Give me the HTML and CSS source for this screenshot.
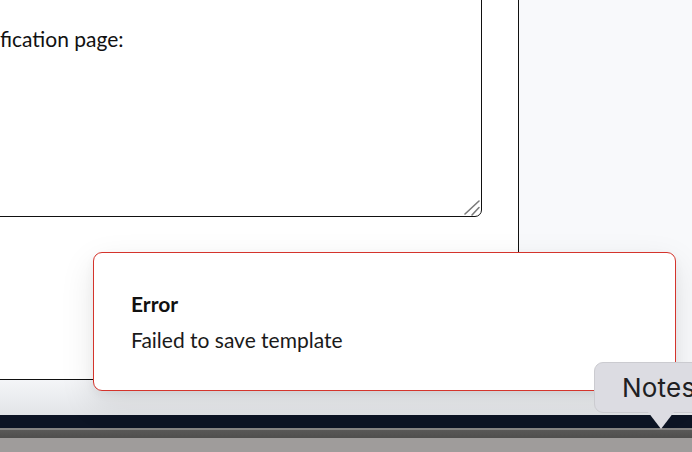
FILE: index.html
```html
<!DOCTYPE html>
<html>
<head>
<meta charset="utf-8">
<link rel="stylesheet" href="styles.css">
</head>
<body>
<div class="screen">
  <div class="app">
    <div class="main">
      <div class="card">
        <textarea class="message" spellcheck="false">fication page:</textarea>
        <svg class="grip" width="18" height="18" viewBox="0 0 18 18" aria-hidden="true">
          <line x1="1" y1="15" x2="15" y2="2" stroke="#7a7a7a" stroke-width="1.6" stroke-linecap="round"/>
          <line x1="8" y1="16" x2="15" y2="8.5" stroke="#7a7a7a" stroke-width="1.6" stroke-linecap="round"/>
        </svg>
      </div>
    </div>
    <div class="side"></div>
  </div>
  <div class="topbar"></div>
  <div class="dock">
    <div class="dock-rim"></div>
    <div class="dock-shade"></div>
    <div class="dock-body"></div>
  </div>

  <div class="toast" role="alert">
    <div class="toast-title">Error</div>
    <div class="toast-desc">Failed to save template</div>
  </div>

  <div class="tooltip">
    <span class="tooltip-label">Notes</span>
    <span class="tooltip-arrow"></span>
  </div>
</div>
</body>
</html>
```

FILE: styles.css
```css
html, body {
  margin: 0;
  padding: 0;
}
body {
  width: 692px;
  height: 452px;
  overflow: hidden;
  background: #f8f9fb;
  font-family: Lato, "Noto Sans", sans-serif;
}
.screen {
  position: relative;
  width: 692px;
  height: 452px;
  display: flex;
  flex-direction: column;
  overflow: hidden;
}
.app {
  height: 415px;
  display: flex;
  background: linear-gradient(to bottom, #f8f9fb 0, #f8f9fb 372px, #eceef1 395px, #e2e4e7 415px);
}
.main {
  margin-left: -24px;
  margin-top: -40px;
  width: 543px;
  flex: none;
}
.card {
  position: relative;
  box-sizing: border-box;
  height: 420px;
  background: #fff;
  border-right: 1px solid #111;
  border-bottom: 1px solid #111;
  padding: 0 36px 0 0;
}
.message {
  display: block;
  box-sizing: border-box;
  width: 506px;
  height: 257px;
  margin: 0;
  padding: 62px 12px 8px 23px;
  border: 1px solid #111;
  border-radius: 7px;
  font-family: Lato, "Noto Sans", sans-serif;
  font-size: 21px;
  line-height: 32px;
  color: #111;
  background: #fff;
  resize: none;
  outline: none;
  overflow: hidden;
}
.grip {
  position: absolute;
  left: 488px;
  top: 239px;
}
.side {
  flex: 1;
}
.topbar {
  height: 13px;
  background: #0c1424;
  flex: none;
}
.dock {
  flex: 1;
  display: flex;
  flex-direction: column;
}
.dock-rim {
  height: 2px;
  background: #858483;
}
.dock-shade {
  height: 8px;
  background: linear-gradient(to bottom, #5a5958, #4f4e4d);
}
.dock-body {
  flex: 1;
  background: #9f9c9b;
}
.toast {
  position: absolute;
  left: 93px;
  top: 252px;
  box-sizing: border-box;
  width: 583px;
  height: 139px;
  padding: 37px 36px 0 37px;
  background: #fff;
  border: 1px solid #d4342c;
  border-radius: 9px;
  box-shadow: 0 12px 34px rgba(0, 0, 0, 0.10), 0 4px 10px rgba(0, 0, 0, 0.05);
  color: #111;
}
.toast-title {
  font-size: 21px;
  line-height: 28px;
  font-weight: 700;
}
.toast-desc {
  margin-top: 8px;
  font-size: 21px;
  line-height: 28px;
  color: #1a1a1a;
}
.tooltip {
  position: absolute;
  left: 594px;
  top: 362px;
  box-sizing: border-box;
  width: 130px;
  height: 51px;
  padding-left: 27px;
  display: flex;
  align-items: center;
  background: #dcdce2;
  border: 1px solid #cbcbd0;
  border-radius: 9px;
}
.tooltip-label {
  font-family: Inter, "Liberation Sans", sans-serif;
  font-size: 26px;
  color: #202022;
  letter-spacing: 0.2px;
}
.tooltip-arrow {
  position: absolute;
  left: 53px;
  top: 49px;
  width: 0;
  height: 0;
  border-left: 13px solid transparent;
  border-right: 13px solid transparent;
  border-top: 17px solid #dcdce2;
}
```
